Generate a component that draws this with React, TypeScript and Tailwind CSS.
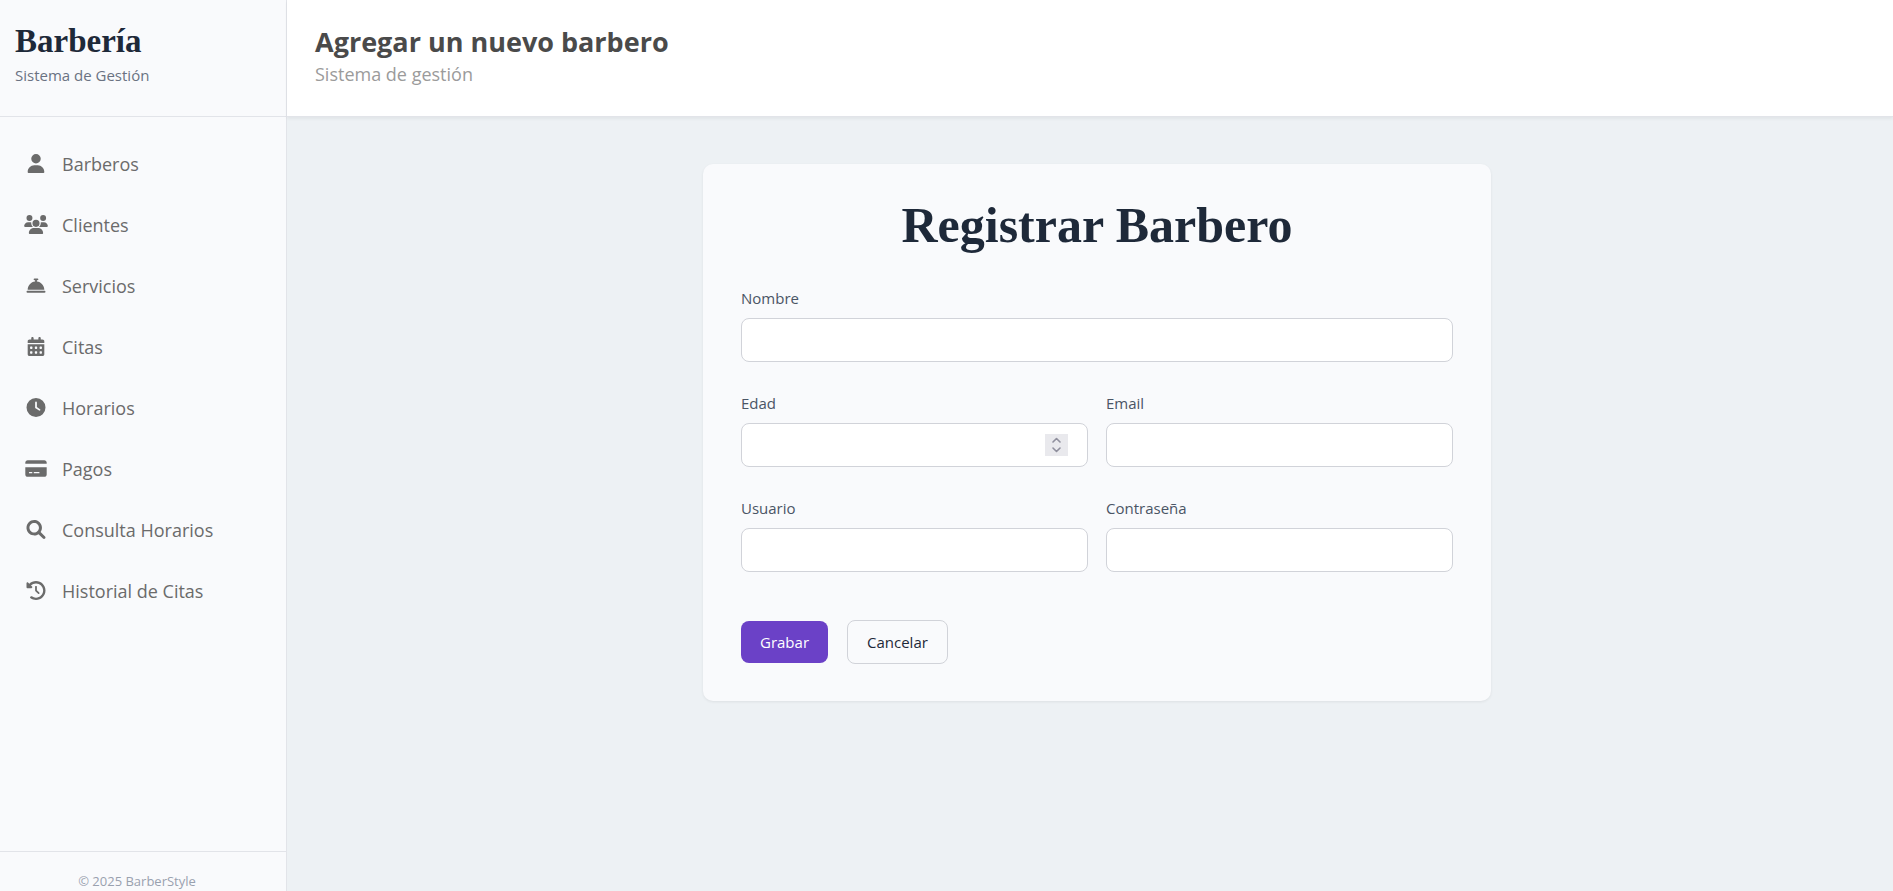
import { useRef, type ComponentType, type ReactNode } from "react";
import {
  FaBellConcierge,
  FaCalendarDays,
  FaClock,
  FaClockRotateLeft,
  FaCreditCard,
  FaUser,
  FaUsers,
} from "react-icons/fa6";

function SearchIcon({ className }: { className?: string }) {
  return (
    <svg className={className} viewBox="0 0 512 512" fill="currentColor" aria-hidden="true">
      <path d="M500.3 443.7l-119.7-119.7c27.22-40.41 40.65-90.9 33.46-144.7C401.8 87.79 326.8 13.32 235.2 1.723C99.01-15.51-15.51 99.01 1.724 235.2c11.6 91.64 86.08 166.7 177.6 178.9c53.8 7.189 104.3-6.236 144.7-33.46l119.7 119.7c15.62 15.62 40.95 15.62 56.57 0C515.9 484.7 515.9 459.3 500.3 443.7zM79.1 208c0-70.58 57.42-128 128-128s128 57.42 128 128c0 70.58-57.42 128-128 128S79.1 278.6 79.1 208z" />
    </svg>
  );
}

const navItems: { label: string; icon: ComponentType<{ className?: string }> }[] = [
  { label: "Barberos", icon: FaUser },
  { label: "Clientes", icon: FaUsers },
  { label: "Servicios", icon: FaBellConcierge },
  { label: "Citas", icon: FaCalendarDays },
  { label: "Horarios", icon: FaClock },
  { label: "Pagos", icon: FaCreditCard },
  { label: "Consulta Horarios", icon: SearchIcon },
  { label: "Historial de Citas", icon: FaClockRotateLeft },
];

const boxClass =
  "w-full rounded-lg border border-[#d1d3d9] bg-white text-base text-gray-800 focus:outline-none";

function Sidebar() {
  return (
    <aside className="flex w-[287px] shrink-0 flex-col border-r border-[#e2e4e9] bg-[#f9fafc]">
      <div className="h-[117px] border-b border-[#e2e4e9] px-[15px] pt-[23px]">
        <h2 className="font-['Liberation_Serif',serif] text-[33px] leading-9 font-bold text-gray-800">
          Barbería
        </h2>
        <p className="mt-1 text-[15px] leading-6 text-gray-500">Sistema de Gestión</p>
      </div>
      <nav className="flex-1 pt-4">
        <ul>
          {navItems.map(({ label, icon: Icon }) => (
            <li key={label}>
              <a href="#" className="flex h-[61px] items-center gap-[14px] px-6 text-[#6b6b6b]">
                <Icon className="h-[19px] w-6 shrink-0" />
                <span className="text-lg">{label}</span>
              </a>
            </li>
          ))}
        </ul>
      </nav>
      <footer className="border-t border-[#e2e4e9] pt-[19px] pr-3 text-center text-[13px] leading-5 text-gray-400">
        © 2025 BarberStyle
      </footer>
    </aside>
  );
}

function Field({ id, label, children }: { id: string; label: string; children: ReactNode }) {
  return (
    <div>
      <label htmlFor={id} className="mb-2 block text-[15px] leading-6 text-gray-600">
        {label}
      </label>
      {children}
    </div>
  );
}

function TextField({ id, label, type = "text" }: { id: string; label: string; type?: string }) {
  return (
    <Field id={id} label={label}>
      <input id={id} name={id} type={type} className={`${boxClass} h-11 px-[19px]`} />
    </Field>
  );
}

function NumberField({ id, label }: { id: string; label: string }) {
  const ref = useRef<HTMLInputElement>(null);
  return (
    <Field id={id} label={label}>
      <div className={`${boxClass} flex h-11 items-center px-[19px]`}>
        <input
          ref={ref}
          id={id}
          name={id}
          type="number"
          className="min-w-0 flex-1 appearance-none bg-transparent focus:outline-none [&::-webkit-inner-spin-button]:appearance-none"
        />
        <div className="flex h-[22px] w-[23px] flex-col bg-[#e9e9ed] text-[#8f8f9d]">
          <button
            type="button"
            tabIndex={-1}
            aria-label="Aumentar"
            onClick={() => ref.current?.stepUp()}
            className="flex flex-1 items-end justify-center pb-0.5"
          >
            <svg width="9" height="6" viewBox="0 0 9 6" fill="none" stroke="currentColor" strokeWidth="1.6" strokeLinecap="round" strokeLinejoin="round">
              <path d="M1 5l3.5-3.5L8 5" />
            </svg>
          </button>
          <button
            type="button"
            tabIndex={-1}
            aria-label="Disminuir"
            onClick={() => ref.current?.stepDown()}
            className="flex flex-1 items-start justify-center pt-0.5"
          >
            <svg width="9" height="6" viewBox="0 0 9 6" fill="none" stroke="currentColor" strokeWidth="1.6" strokeLinecap="round" strokeLinejoin="round">
              <path d="M1 1l3.5 3.5L8 1" />
            </svg>
          </button>
        </div>
      </div>
    </Field>
  );
}

function BarberForm() {
  return (
    <form
      onSubmit={(e) => e.preventDefault()}
      className="w-full max-w-[788px] rounded-[10px] bg-[#f9fafc] px-[38px] pt-9 pb-[37px] shadow-[0_1px_3px_rgba(0,0,0,0.07)]"
    >
      <h2 className="text-center font-['Liberation_Serif',serif] text-[50px] leading-[50px] font-bold text-gray-800">
        Registrar Barbero
      </h2>
      <div className="mt-9 flex flex-col gap-[29px]">
        <TextField id="nombre" label="Nombre" />
        <div className="grid grid-cols-2 gap-[18px]">
          <NumberField id="edad" label="Edad" />
          <TextField id="email" label="Email" type="email" />
        </div>
        <div className="grid grid-cols-2 gap-[18px]">
          <TextField id="usuario" label="Usuario" />
          <TextField id="contrasena" label="Contraseña" type="password" />
        </div>
      </div>
      <div className="mt-12 flex items-center gap-[19px]">
        <button type="submit" className="h-[42px] rounded-lg bg-[#6b41c7] px-[19px] text-[15px] text-white">
          Grabar
        </button>
        <button
          type="button"
          className="h-11 rounded-lg border border-[#d1d3d9] px-[19px] text-[15px] text-gray-800"
        >
          Cancelar
        </button>
      </div>
    </form>
  );
}

export default function App() {
  return (
    <div className="flex min-h-screen bg-[#edf1f4] font-['Open_Sans','Noto_Sans',sans-serif]">
      <Sidebar />
      <div className="flex min-w-0 flex-1 flex-col">
        <header className="h-[117px] border-b border-[#e2e4e9] bg-white px-7 pt-6 shadow-[0_2px_3px_rgba(0,0,0,0.05)]">
          <h1 className="text-[27px] leading-9 font-bold text-[#4a4a4a]">Agregar un nuevo barbero</h1>
          <p className="text-lg text-[#9b9b9b]">Sistema de gestión</p>
        </header>
        <main className="flex justify-center pt-[47px] pr-9 pb-12 pl-[50px]">
          <BarberForm />
        </main>
      </div>
    </div>
  );
}
